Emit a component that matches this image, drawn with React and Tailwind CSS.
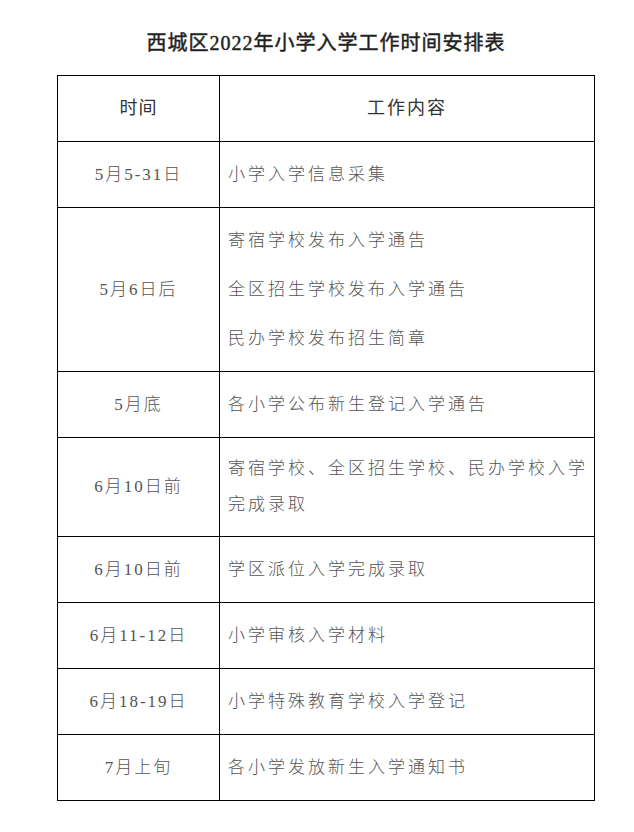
// App.jsx — 西城区2022年小学入学工作时间安排表
const ROWS = [
  { date: '5月5-31日', items: ['小学入学信息采集'], h: 'h-[66px]' },
  {
    date: '5月6日后',
    items: ['寄宿学校发布入学通告', '全区招生学校发布入学通告', '民办学校发布招生简章'],
    h: 'h-[164px]',
    spaced: true,
  },
  { date: '5月底', items: ['各小学公布新生登记入学通告'], h: 'h-[66px]' },
  {
    date: '6月10日前',
    items: ['寄宿学校、全区招生学校、民办学校入学', '完成录取'],
    h: 'h-[99px]',
  },
  { date: '6月10日前', items: ['学区派位入学完成录取'], h: 'h-[66px]' },
  { date: '6月11-12日', items: ['小学审核入学材料'], h: 'h-[66px]' },
  { date: '6月18-19日', items: ['小学特殊教育学校入学登记'], h: 'h-[66px]' },
  { date: '7月上旬', items: ['各小学发放新生入学通知书'], h: 'h-[66px]' },
];

export default function App() {
  return (
    <div className="w-[634px] h-[832px] bg-white font-[family-name:'Liberation_Serif','Noto_Sans_CJK_SC',serif]">
      <h1 className="ml-[57px] w-[538px] pt-[31px] h-[75px] text-center text-[20px] leading-[24px] tracking-[1px] font-normal text-[#222] [-webkit-text-stroke:0.45px_#222]">
        西城区2022年小学入学工作时间安排表
      </h1>

      <table className="ml-[57px] w-[538px] border-collapse table-fixed">
        <colgroup>
          <col className="w-[162px]" />
          <col />
        </colgroup>
        <thead>
          <tr className="h-[66px]">
            <th className="border border-black text-center text-[18px] tracking-[1px] font-normal text-[#333]">
              时间
            </th>
            <th className="border border-black text-center text-[18px] tracking-[2px] font-normal text-[#333]">
              工作内容
            </th>
          </tr>
        </thead>
        <tbody>
          {ROWS.map((row, i) => (
            <tr key={i} className={row.h}>
              <td className="border border-black text-center align-middle text-[17px] tracking-[2px] text-[#555] font-light">
                {row.date}
              </td>
              <td className="border border-black pl-2 pr-1 align-middle text-[17px] tracking-[3px] text-[#555] font-light">
                <div
                  className={
                    row.spaced
                      ? 'flex flex-col gap-[25px] leading-[24px]'
                      : 'flex flex-col leading-[36px]'
                  }
                >
                  {row.items.map((t, j) => (
                    <span key={j} className="whitespace-nowrap">
                      {t}
                    </span>
                  ))}
                </div>
              </td>
            </tr>
          ))}
        </tbody>
      </table>
    </div>
  );
}
